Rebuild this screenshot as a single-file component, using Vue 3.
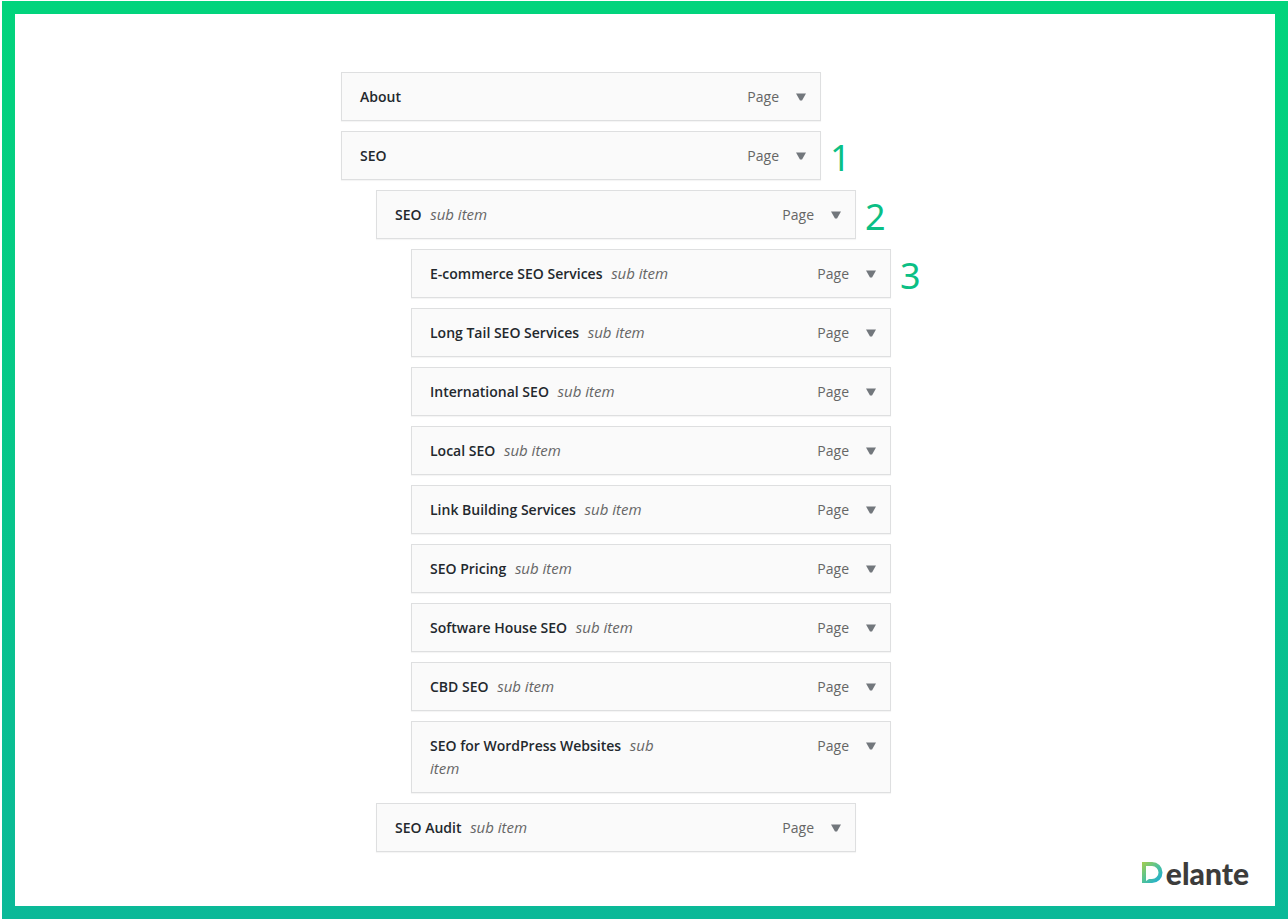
<script setup>
const items = [
  { title: 'About', depth: 0 },
  { title: 'SEO', depth: 0, level: 1 },
  { title: 'SEO', depth: 1, level: 2 },
  { title: 'E-commerce SEO Services', depth: 2, level: 3 },
  { title: 'Long Tail SEO Services', depth: 2 },
  { title: 'International SEO', depth: 2 },
  { title: 'Local SEO', depth: 2 },
  { title: 'Link Building Services', depth: 2 },
  { title: 'SEO Pricing', depth: 2 },
  { title: 'Software House SEO', depth: 2 },
  { title: 'CBD SEO', depth: 2 },
  { title: 'SEO for WordPress Websites', depth: 2 },
  { title: 'SEO Audit', depth: 1 },
]
</script>

<template>
  <div class="frame">
    <main class="sheet">
      <ul class="menu">
        <li v-for="(item, i) in items" :key="i" class="row" :class="'depth-' + item.depth">
          <div class="card">
            <div class="label">
              <span class="title">{{ item.title }}</span>
              <template v-if="item.depth">{{ ' ' }}<em class="sub">sub item</em></template>
            </div>
            <span class="type">Page</span>
            <button class="toggle" type="button" :aria-label="'Edit ' + item.title">
              <svg width="10" height="8" viewBox="0 0 10 8" aria-hidden="true">
                <path d="M0 0.5H10L6 7.5H4Z" fill="#72777c" />
              </svg>
            </button>
          </div>
          <span v-if="item.level" class="level">{{ item.level }}</span>
        </li>
      </ul>
      <footer class="brand">
        <svg class="mark" width="21" height="22" viewBox="0 0 21 22" aria-hidden="true">
          <defs>
            <linearGradient id="mark-fill" x1="0" y1="0" x2="1" y2="1">
              <stop offset="0" stop-color="#a5cd4f" />
              <stop offset="0.5" stop-color="#4fc29a" />
              <stop offset="1" stop-color="#12a9e0" />
            </linearGradient>
          </defs>
          <path
            fill="url(#mark-fill)"
            fill-rule="evenodd"
            d="M0 0H10A10.5 10.5 0 0 1 10 21H0ZM4 4V19L7 17H10A6.5 6.5 0 0 0 10 4Z"
          />
        </svg>
        <span class="name">elante</span>
      </footer>
    </main>
  </div>
</template>

<style>
body {
  margin: 0;
  background: #fff;
}
</style>

<style scoped>
.frame {
  box-sizing: border-box;
  display: flex;
  min-height: 100vh;
  padding: 1px 0 2px 2px;
  font-family: "Open Sans", "Noto Sans", sans-serif;
}

.sheet {
  flex: 1;
  display: flex;
  flex-direction: column;
  padding-top: 58px;
  border: 13px solid transparent;
  background:
    linear-gradient(#fff, #fff) padding-box,
    linear-gradient(#02d47c, #0bb998) border-box;
}

.menu {
  box-sizing: border-box;
  width: 100%;
  max-width: 608px;
  margin: 0 auto;
  padding: 0;
  list-style: none;
  display: flex;
  flex-direction: column;
  gap: 10px;
}

.row {
  display: flex;
  align-items: center;
}

.depth-1 {
  padding-left: 35px;
}

.depth-2 {
  padding-left: 70px;
}

.card {
  box-sizing: border-box;
  width: 480px;
  min-height: 49px;
  display: flex;
  align-items: flex-start;
  padding: 12px 11px 12px 18px;
  border: 1px solid #dedfe0;
  background: #fafafa;
  box-shadow: 0 1px 1px rgba(0, 0, 0, 0.04);
  font-size: 14px;
  line-height: 23px;
}

.label {
  width: 240px;
  margin-right: auto;
}

.title {
  color: #23282d;
  font-weight: 600;
}

.sub {
  margin-left: 5px;
  color: #666;
  font-size: 15px;
}

.type {
  color: #666;
}

.toggle {
  display: flex;
  align-items: center;
  justify-content: center;
  width: 16px;
  height: 23px;
  margin-left: 14px;
  padding: 0;
  border: 0;
  background: none;
}

.level {
  margin-left: 9px;
  padding-top: 5px;
  color: #0bbf85;
  font-family: "Noto Sans", sans-serif;
  font-size: 36px;
  line-height: 40px;
}

.brand {
  display: flex;
  align-items: center;
  justify-content: flex-end;
  gap: 3px;
  margin-top: auto;
  padding: 0 26px 21px 0;
}

.name {
  color: #3c3c3b;
  font-family: Lato, sans-serif;
  font-size: 30px;
  font-weight: 900;
  line-height: 24px;
}
</style>
